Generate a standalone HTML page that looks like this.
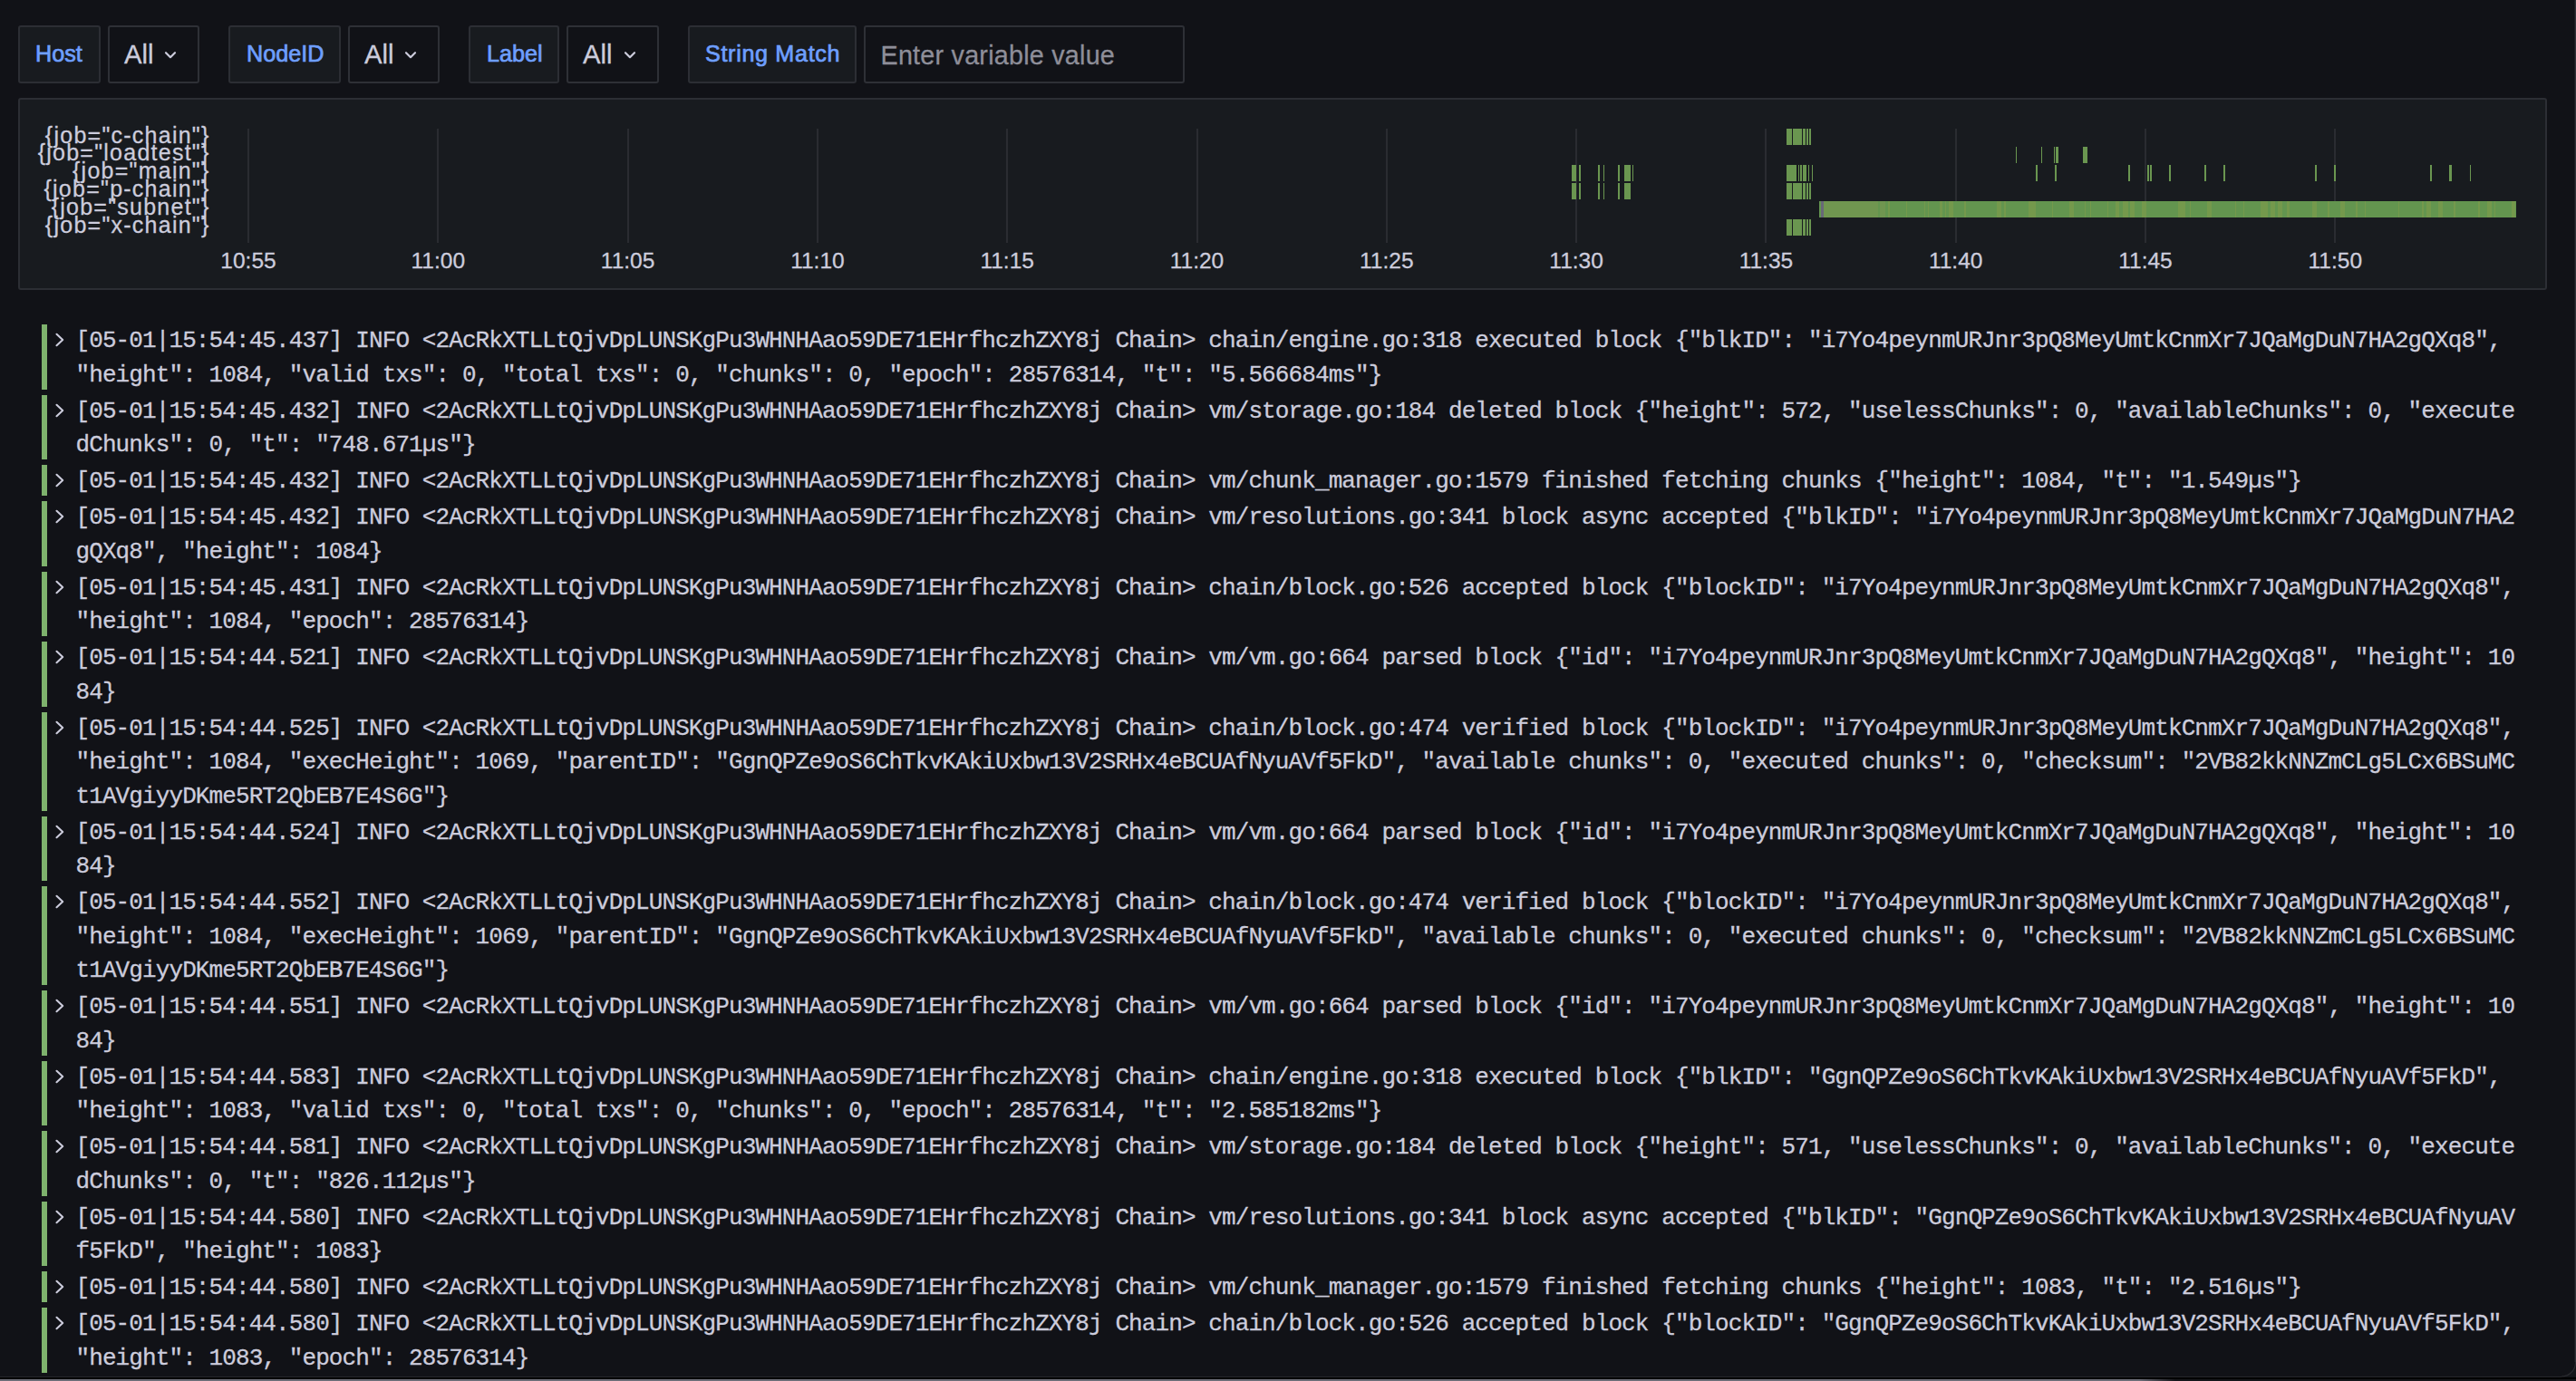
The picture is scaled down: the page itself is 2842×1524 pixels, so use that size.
<!DOCTYPE html>
<html><head><meta charset="utf-8"><style>
html,body{margin:0;padding:0;}
body{width:2842px;height:1524px;overflow:hidden;background:#111217;position:relative;font-family:"Liberation Sans",sans-serif;color:#ccccdc;}
.abs{position:absolute;}
.lbl{position:absolute;top:28px;height:64px;box-sizing:border-box;background:#181b1f;border:2px solid #2c2e34;border-radius:3px;}
.val{position:absolute;top:28px;height:64px;box-sizing:border-box;background:#111217;border:2px solid #2e3036;border-radius:3px;}
.lt{position:absolute;font-weight:400;font-size:25.2px;line-height:25px;color:#6e9fff;white-space:pre;-webkit-text-stroke:0.7px #6e9fff;}
.vt{position:absolute;font-size:29.3px;line-height:28.5px;color:#ccccdc;white-space:pre;-webkit-text-stroke:0.3px #ccccdc;}
.chev{position:absolute;top:55.5px;width:14px;height:10px;}
#panel{position:absolute;left:20px;top:108px;width:2790px;height:212px;box-sizing:border-box;background:#181b1f;border:2px solid #2c2e34;border-radius:3px;}
.job{position:absolute;right:2610.4px;font-size:25px;line-height:25px;letter-spacing:1.25px;white-space:pre;text-align:right;-webkit-text-stroke:0.3px #ccccdc;}
.grid{position:absolute;top:142px;height:126px;width:2px;background:#2a2c31;}
.ax{position:absolute;top:0;font-size:24.5px;line-height:24.5px;white-space:pre;width:120px;text-align:center;-webkit-text-stroke:0.3px #ccccdc;}
.tk{position:absolute;height:18px;background:#6a9650;}
.ent{position:absolute;left:0;width:2842px;}
.bar{position:absolute;left:46px;width:6px;top:3px;background:#7eb26d;}
.cv{position:absolute;left:60px;width:12px;height:16px;}
.tx{position:absolute;left:83.5px;top:3px;font-family:"Liberation Mono",monospace;font-size:26px;letter-spacing:-0.899px;line-height:37.5px;white-space:pre;color:#ccccdc;-webkit-text-stroke:0.3px #ccccdc;}
</style></head><body>

<div class="lbl" style="left:20px;width:91px"></div>
<div class="lt" style="left:39px;top:47px;letter-spacing:0px">Host</div>
<div class="val" style="left:119px;width:101px"></div>
<div class="vt" style="left:137px;top:46px">All</div>
<svg class="chev" style="left:181px" viewBox="0 0 14 10"><path d="M2 2.2 L7 7.2 L12 2.2" fill="none" stroke="#ccccdc" stroke-width="2.2" stroke-linecap="round" stroke-linejoin="round"/></svg>
<div class="lbl" style="left:252px;width:124px"></div>
<div class="lt" style="left:272px;top:47px;letter-spacing:0px">NodeID</div>
<div class="val" style="left:384px;width:101px"></div>
<div class="vt" style="left:402px;top:46px">All</div>
<svg class="chev" style="left:446px" viewBox="0 0 14 10"><path d="M2 2.2 L7 7.2 L12 2.2" fill="none" stroke="#ccccdc" stroke-width="2.2" stroke-linecap="round" stroke-linejoin="round"/></svg>
<div class="lbl" style="left:517px;width:100px"></div>
<div class="lt" style="left:537px;top:47px;letter-spacing:0px">Label</div>
<div class="val" style="left:625px;width:102px"></div>
<div class="vt" style="left:643px;top:46px">All</div>
<svg class="chev" style="left:688px" viewBox="0 0 14 10"><path d="M2 2.2 L7 7.2 L12 2.2" fill="none" stroke="#ccccdc" stroke-width="2.2" stroke-linecap="round" stroke-linejoin="round"/></svg>
<div class="lbl" style="left:759px;width:186px"></div>
<div class="lt" style="left:778px;top:47px;letter-spacing:0.65px">String Match</div>
<div class="val" style="left:953px;width:354px"></div>
<div class="vt" style="left:971.5px;top:46.5px;color:#8e8e99;font-size:28.7px;letter-spacing:0.25px;-webkit-text-stroke:0.3px #8e8e99">Enter variable value</div>
<div id="panel"></div>
<div class="job" style="top:136.55px">{job="c-chain"}</div>
<div class="job" style="top:156.41px">{job="loadtest"}</div>
<div class="job" style="top:176.27px">{job="main"}</div>
<div class="job" style="top:196.13px">{job="p-chain"}</div>
<div class="job" style="top:215.99px">{job="subnet"}</div>
<div class="job" style="top:235.85px">{job="x-chain"}</div>
<div class="grid" style="left:273.00px"></div>
<div class="ax" style="left:214.00px;top:276.43px">10:55</div>
<div class="grid" style="left:482.30px"></div>
<div class="ax" style="left:423.30px;top:276.43px">11:00</div>
<div class="grid" style="left:691.60px"></div>
<div class="ax" style="left:632.60px;top:276.43px">11:05</div>
<div class="grid" style="left:900.90px"></div>
<div class="ax" style="left:841.90px;top:276.43px">11:10</div>
<div class="grid" style="left:1110.20px"></div>
<div class="ax" style="left:1051.20px;top:276.43px">11:15</div>
<div class="grid" style="left:1319.50px"></div>
<div class="ax" style="left:1260.50px;top:276.43px">11:20</div>
<div class="grid" style="left:1528.80px"></div>
<div class="ax" style="left:1469.80px;top:276.43px">11:25</div>
<div class="grid" style="left:1738.10px"></div>
<div class="ax" style="left:1679.10px;top:276.43px">11:30</div>
<div class="grid" style="left:1947.40px"></div>
<div class="ax" style="left:1888.40px;top:276.43px">11:35</div>
<div class="grid" style="left:2156.70px"></div>
<div class="ax" style="left:2097.70px;top:276.43px">11:40</div>
<div class="grid" style="left:2366.00px"></div>
<div class="ax" style="left:2307.00px;top:276.43px">11:45</div>
<div class="grid" style="left:2575.30px"></div>
<div class="ax" style="left:2516.30px;top:276.43px">11:50</div>
<div class="tk" style="left:1734.0px;width:5.0px;top:182px"></div>
<div class="tk" style="left:1734.0px;width:5.0px;top:202px"></div>
<div class="tk" style="left:1742.0px;width:2.0px;top:182px"></div>
<div class="tk" style="left:1742.0px;width:2.0px;top:202px"></div>
<div class="tk" style="left:1763.0px;width:2.0px;top:182px"></div>
<div class="tk" style="left:1763.0px;width:2.0px;top:202px"></div>
<div class="tk" style="left:1769.0px;width:1.2px;top:182px"></div>
<div class="tk" style="left:1769.0px;width:1.2px;top:202px"></div>
<div class="tk" style="left:1785.0px;width:2.0px;top:182px"></div>
<div class="tk" style="left:1785.0px;width:2.0px;top:202px"></div>
<div class="tk" style="left:1792.0px;width:7.0px;top:182px"></div>
<div class="tk" style="left:1792.0px;width:7.0px;top:202px"></div>
<div class="tk" style="left:1801.0px;width:1.2px;top:182px"></div>
<div class="tk" style="left:1971.0px;width:6.0px;top:142px"></div>
<div class="tk" style="left:1971.0px;width:6.0px;top:202px"></div>
<div class="tk" style="left:1971.0px;width:6.0px;top:242px"></div>
<div class="tk" style="left:1978.0px;width:10.0px;top:142px"></div>
<div class="tk" style="left:1978.0px;width:10.0px;top:202px"></div>
<div class="tk" style="left:1978.0px;width:10.0px;top:242px"></div>
<div class="tk" style="left:1989.0px;width:3.0px;top:142px"></div>
<div class="tk" style="left:1989.0px;width:3.0px;top:202px"></div>
<div class="tk" style="left:1989.0px;width:3.0px;top:242px"></div>
<div class="tk" style="left:1993.0px;width:2.0px;top:142px"></div>
<div class="tk" style="left:1993.0px;width:2.0px;top:202px"></div>
<div class="tk" style="left:1993.0px;width:2.0px;top:242px"></div>
<div class="tk" style="left:1996.0px;width:2.0px;top:142px"></div>
<div class="tk" style="left:1996.0px;width:2.0px;top:202px"></div>
<div class="tk" style="left:1996.0px;width:2.0px;top:242px"></div>
<div class="tk" style="left:1971.0px;width:11.0px;top:182px"></div>
<div class="tk" style="left:1983.7px;width:1.3px;top:182px"></div>
<div class="tk" style="left:1986.0px;width:2.0px;top:182px"></div>
<div class="tk" style="left:1989.0px;width:4.0px;top:182px"></div>
<div class="tk" style="left:1994.8px;width:1.2px;top:182px"></div>
<div class="tk" style="left:1999.0px;width:1.2px;top:182px"></div>
<div class="tk" style="left:2224.0px;width:1.2px;top:162px"></div>
<div class="tk" style="left:2252.0px;width:1.2px;top:162px"></div>
<div class="tk" style="left:2266.0px;width:1.2px;top:162px"></div>
<div class="tk" style="left:2268.2px;width:2.8px;top:162px"></div>
<div class="tk" style="left:2298.0px;width:5.0px;top:162px"></div>
<div class="tk" style="left:2245.7px;width:2.0px;top:182px"></div>
<div class="tk" style="left:2266.7px;width:2.0px;top:182px"></div>
<div class="tk" style="left:2347.6px;width:2.0px;top:182px"></div>
<div class="tk" style="left:2368.6px;width:2.0px;top:182px"></div>
<div class="tk" style="left:2371.7px;width:2.0px;top:182px"></div>
<div class="tk" style="left:2392.6px;width:2.0px;top:182px"></div>
<div class="tk" style="left:2431.6px;width:2.0px;top:182px"></div>
<div class="tk" style="left:2452.5px;width:2.0px;top:182px"></div>
<div class="tk" style="left:2554.2px;width:2.0px;top:182px"></div>
<div class="tk" style="left:2575.2px;width:2.0px;top:182px"></div>
<div class="tk" style="left:2681.2px;width:2.0px;top:182px"></div>
<div class="tk" style="left:2702.0px;width:3.0px;top:182px"></div>
<div class="tk" style="left:2725.0px;width:1.2px;top:182px"></div>
<div class="tk" style="left:2007px;width:769px;top:222px;background:linear-gradient(90deg,#63954f 0.0px,#63954f 8.0px,#74994c 8.0px,#74994c 9.5px,#63954f 9.5px,#63954f 21.5px,#74994c 21.5px,#74994c 29.5px,#63954f 29.5px,#63954f 32.5px,#74994c 32.5px,#74994c 33.5px,#63954f 33.5px,#63954f 68.5px,#74994c 68.5px,#74994c 73.5px,#63954f 73.5px,#63954f 76.5px,#74994c 76.5px,#74994c 78.5px,#63954f 78.5px,#63954f 96.5px,#74994c 96.5px,#74994c 97.5px,#63954f 97.5px,#63954f 115.5px,#74994c 115.5px,#74994c 117.0px,#63954f 117.0px,#63954f 120.0px,#74994c 120.0px,#74994c 121.0px,#63954f 121.0px,#63954f 133.0px,#74994c 133.0px,#74994c 136.0px,#63954f 136.0px,#63954f 139.0px,#74994c 139.0px,#74994c 140.5px,#63954f 140.5px,#63954f 143.5px,#74994c 143.5px,#74994c 148.5px,#63954f 148.5px,#63954f 160.5px,#74994c 160.5px,#74994c 161.5px,#63954f 161.5px,#63954f 196.5px,#74994c 196.5px,#74994c 201.5px,#63954f 201.5px,#63954f 204.5px,#74994c 204.5px,#74994c 206.0px,#63954f 206.0px,#63954f 231.0px,#74994c 231.0px,#74994c 239.0px,#63954f 239.0px,#63954f 257.0px,#74994c 257.0px,#74994c 258.0px,#63954f 258.0px,#63954f 276.0px,#74994c 276.0px,#74994c 281.0px,#63954f 281.0px,#63954f 293.0px,#74994c 293.0px,#74994c 294.0px,#63954f 294.0px,#63954f 299.0px,#74994c 299.0px,#74994c 300.0px,#63954f 300.0px,#63954f 318.0px,#74994c 318.0px,#74994c 319.5px,#63954f 319.5px,#63954f 327.5px,#74994c 327.5px,#74994c 330.5px,#63954f 330.5px,#63954f 335.5px,#74994c 335.5px,#74994c 340.5px,#63954f 340.5px,#63954f 343.5px,#74994c 343.5px,#74994c 348.5px,#63954f 348.5px,#63954f 356.5px,#74994c 356.5px,#74994c 361.5px,#63954f 361.5px,#63954f 396.5px,#74994c 396.5px,#74994c 404.5px,#63954f 404.5px,#63954f 409.5px,#74994c 409.5px,#74994c 410.5px,#63954f 410.5px,#63954f 428.5px,#74994c 428.5px,#74994c 433.5px,#63954f 433.5px,#63954f 458.5px,#74994c 458.5px,#74994c 460.0px,#63954f 460.0px,#63954f 468.0px,#74994c 468.0px,#74994c 469.0px,#63954f 469.0px,#63954f 487.0px,#74994c 487.0px,#74994c 495.0px,#63954f 495.0px,#63954f 498.0px,#74994c 498.0px,#74994c 503.0px,#63954f 503.0px,#63954f 506.0px,#74994c 506.0px,#74994c 511.0px,#63954f 511.0px,#63954f 516.0px,#74994c 516.0px,#74994c 519.0px,#63954f 519.0px,#63954f 544.0px,#74994c 544.0px,#74994c 549.0px,#63954f 549.0px,#63954f 561.0px,#74994c 561.0px,#74994c 563.0px,#63954f 563.0px,#63954f 575.0px,#74994c 575.0px,#74994c 580.0px,#63954f 580.0px,#63954f 592.0px,#74994c 592.0px,#74994c 594.0px,#63954f 594.0px,#63954f 602.0px,#74994c 602.0px,#74994c 603.5px,#63954f 603.5px,#63954f 638.5px,#74994c 638.5px,#74994c 640.0px,#63954f 640.0px,#63954f 665.0px,#74994c 665.0px,#74994c 666.5px,#63954f 666.5px,#63954f 669.5px,#74994c 669.5px,#74994c 674.5px,#63954f 674.5px,#63954f 682.5px,#74994c 682.5px,#74994c 687.5px,#63954f 687.5px,#63954f 699.5px,#74994c 699.5px,#74994c 701.5px,#63954f 701.5px,#63954f 726.5px,#74994c 726.5px,#74994c 729.5px,#63954f 729.5px,#63954f 737.5px,#74994c 737.5px,#74994c 742.5px,#63954f 742.5px,#63954f 745.5px,#74994c 745.5px,#74994c 746.5px,#63954f 746.5px,#63954f 764.5px,#74994c 764.5px,#74994c 767.5px,#63954f 767.5px,#63954f 772.5px,#74994c 772.5px,#74994c 774.5px)"></div>
<div class="tk" style="left:2012px;width:68px;top:222px;background:linear-gradient(90deg,#709650 0,#709650 60px,#63954f 60px,#63954f 62px,#709650 62px)"></div>
<div class="tk" style="left:2009px;width:3px;top:222px;background:#686878"></div>
<div class="ent" style="top:355.00px;height:77.50px">
<div class="bar" style="height:71.50px"></div>
<svg class="cv" style="top:12px" viewBox="0 0 12 16"><path d="M2.5 1.8 L9.2 8 L2.5 14.2" fill="none" stroke="#ccccdc" stroke-width="2.1" stroke-linecap="round" stroke-linejoin="round"/></svg>
<div class="tx">[05-01|15:54:45.437] INFO &lt;2AcRkXTLLtQjvDpLUNSKgPu3WHNHAao59DE71EHrfhczhZXY8j Chain&gt; chain/engine.go:318 executed block {&quot;blkID&quot;: &quot;i7Yo4peynmURJnr3pQ8MeyUmtkCnmXr7JQaMgDuN7HA2gQXq8&quot;, 
&quot;height&quot;: 1084, &quot;valid txs&quot;: 0, &quot;total txs&quot;: 0, &quot;chunks&quot;: 0, &quot;epoch&quot;: 28576314, &quot;t&quot;: &quot;5.566684ms&quot;}</div>
</div>
<div class="ent" style="top:432.50px;height:77.50px">
<div class="bar" style="height:71.50px"></div>
<svg class="cv" style="top:12px" viewBox="0 0 12 16"><path d="M2.5 1.8 L9.2 8 L2.5 14.2" fill="none" stroke="#ccccdc" stroke-width="2.1" stroke-linecap="round" stroke-linejoin="round"/></svg>
<div class="tx">[05-01|15:54:45.432] INFO &lt;2AcRkXTLLtQjvDpLUNSKgPu3WHNHAao59DE71EHrfhczhZXY8j Chain&gt; vm/storage.go:184 deleted block {&quot;height&quot;: 572, &quot;uselessChunks&quot;: 0, &quot;availableChunks&quot;: 0, &quot;execute
dChunks&quot;: 0, &quot;t&quot;: &quot;748.671µs&quot;}</div>
</div>
<div class="ent" style="top:510.00px;height:40.00px">
<div class="bar" style="height:34.00px"></div>
<svg class="cv" style="top:12px" viewBox="0 0 12 16"><path d="M2.5 1.8 L9.2 8 L2.5 14.2" fill="none" stroke="#ccccdc" stroke-width="2.1" stroke-linecap="round" stroke-linejoin="round"/></svg>
<div class="tx">[05-01|15:54:45.432] INFO &lt;2AcRkXTLLtQjvDpLUNSKgPu3WHNHAao59DE71EHrfhczhZXY8j Chain&gt; vm/chunk_manager.go:1579 finished fetching chunks {&quot;height&quot;: 1084, &quot;t&quot;: &quot;1.549µs&quot;}</div>
</div>
<div class="ent" style="top:550.00px;height:77.50px">
<div class="bar" style="height:71.50px"></div>
<svg class="cv" style="top:12px" viewBox="0 0 12 16"><path d="M2.5 1.8 L9.2 8 L2.5 14.2" fill="none" stroke="#ccccdc" stroke-width="2.1" stroke-linecap="round" stroke-linejoin="round"/></svg>
<div class="tx">[05-01|15:54:45.432] INFO &lt;2AcRkXTLLtQjvDpLUNSKgPu3WHNHAao59DE71EHrfhczhZXY8j Chain&gt; vm/resolutions.go:341 block async accepted {&quot;blkID&quot;: &quot;i7Yo4peynmURJnr3pQ8MeyUmtkCnmXr7JQaMgDuN7HA2
gQXq8&quot;, &quot;height&quot;: 1084}</div>
</div>
<div class="ent" style="top:627.50px;height:77.50px">
<div class="bar" style="height:71.50px"></div>
<svg class="cv" style="top:12px" viewBox="0 0 12 16"><path d="M2.5 1.8 L9.2 8 L2.5 14.2" fill="none" stroke="#ccccdc" stroke-width="2.1" stroke-linecap="round" stroke-linejoin="round"/></svg>
<div class="tx">[05-01|15:54:45.431] INFO &lt;2AcRkXTLLtQjvDpLUNSKgPu3WHNHAao59DE71EHrfhczhZXY8j Chain&gt; chain/block.go:526 accepted block {&quot;blockID&quot;: &quot;i7Yo4peynmURJnr3pQ8MeyUmtkCnmXr7JQaMgDuN7HA2gQXq8&quot;,
&quot;height&quot;: 1084, &quot;epoch&quot;: 28576314}</div>
</div>
<div class="ent" style="top:705.00px;height:77.50px">
<div class="bar" style="height:71.50px"></div>
<svg class="cv" style="top:12px" viewBox="0 0 12 16"><path d="M2.5 1.8 L9.2 8 L2.5 14.2" fill="none" stroke="#ccccdc" stroke-width="2.1" stroke-linecap="round" stroke-linejoin="round"/></svg>
<div class="tx">[05-01|15:54:44.521] INFO &lt;2AcRkXTLLtQjvDpLUNSKgPu3WHNHAao59DE71EHrfhczhZXY8j Chain&gt; vm/vm.go:664 parsed block {&quot;id&quot;: &quot;i7Yo4peynmURJnr3pQ8MeyUmtkCnmXr7JQaMgDuN7HA2gQXq8&quot;, &quot;height&quot;: 10
84}</div>
</div>
<div class="ent" style="top:782.50px;height:115.00px">
<div class="bar" style="height:109.00px"></div>
<svg class="cv" style="top:12px" viewBox="0 0 12 16"><path d="M2.5 1.8 L9.2 8 L2.5 14.2" fill="none" stroke="#ccccdc" stroke-width="2.1" stroke-linecap="round" stroke-linejoin="round"/></svg>
<div class="tx">[05-01|15:54:44.525] INFO &lt;2AcRkXTLLtQjvDpLUNSKgPu3WHNHAao59DE71EHrfhczhZXY8j Chain&gt; chain/block.go:474 verified block {&quot;blockID&quot;: &quot;i7Yo4peynmURJnr3pQ8MeyUmtkCnmXr7JQaMgDuN7HA2gQXq8&quot;,
&quot;height&quot;: 1084, &quot;execHeight&quot;: 1069, &quot;parentID&quot;: &quot;GgnQPZe9oS6ChTkvKAkiUxbw13V2SRHx4eBCUAfNyuAVf5FkD&quot;, &quot;available chunks&quot;: 0, &quot;executed chunks&quot;: 0, &quot;checksum&quot;: &quot;2VB82kkNNZmCLg5LCx6BSuMC
t1AVgiyyDKme5RT2QbEB7E4S6G&quot;}</div>
</div>
<div class="ent" style="top:897.50px;height:77.50px">
<div class="bar" style="height:71.50px"></div>
<svg class="cv" style="top:12px" viewBox="0 0 12 16"><path d="M2.5 1.8 L9.2 8 L2.5 14.2" fill="none" stroke="#ccccdc" stroke-width="2.1" stroke-linecap="round" stroke-linejoin="round"/></svg>
<div class="tx">[05-01|15:54:44.524] INFO &lt;2AcRkXTLLtQjvDpLUNSKgPu3WHNHAao59DE71EHrfhczhZXY8j Chain&gt; vm/vm.go:664 parsed block {&quot;id&quot;: &quot;i7Yo4peynmURJnr3pQ8MeyUmtkCnmXr7JQaMgDuN7HA2gQXq8&quot;, &quot;height&quot;: 10
84}</div>
</div>
<div class="ent" style="top:975.00px;height:115.00px">
<div class="bar" style="height:109.00px"></div>
<svg class="cv" style="top:12px" viewBox="0 0 12 16"><path d="M2.5 1.8 L9.2 8 L2.5 14.2" fill="none" stroke="#ccccdc" stroke-width="2.1" stroke-linecap="round" stroke-linejoin="round"/></svg>
<div class="tx">[05-01|15:54:44.552] INFO &lt;2AcRkXTLLtQjvDpLUNSKgPu3WHNHAao59DE71EHrfhczhZXY8j Chain&gt; chain/block.go:474 verified block {&quot;blockID&quot;: &quot;i7Yo4peynmURJnr3pQ8MeyUmtkCnmXr7JQaMgDuN7HA2gQXq8&quot;,
&quot;height&quot;: 1084, &quot;execHeight&quot;: 1069, &quot;parentID&quot;: &quot;GgnQPZe9oS6ChTkvKAkiUxbw13V2SRHx4eBCUAfNyuAVf5FkD&quot;, &quot;available chunks&quot;: 0, &quot;executed chunks&quot;: 0, &quot;checksum&quot;: &quot;2VB82kkNNZmCLg5LCx6BSuMC
t1AVgiyyDKme5RT2QbEB7E4S6G&quot;}</div>
</div>
<div class="ent" style="top:1090.00px;height:77.50px">
<div class="bar" style="height:71.50px"></div>
<svg class="cv" style="top:12px" viewBox="0 0 12 16"><path d="M2.5 1.8 L9.2 8 L2.5 14.2" fill="none" stroke="#ccccdc" stroke-width="2.1" stroke-linecap="round" stroke-linejoin="round"/></svg>
<div class="tx">[05-01|15:54:44.551] INFO &lt;2AcRkXTLLtQjvDpLUNSKgPu3WHNHAao59DE71EHrfhczhZXY8j Chain&gt; vm/vm.go:664 parsed block {&quot;id&quot;: &quot;i7Yo4peynmURJnr3pQ8MeyUmtkCnmXr7JQaMgDuN7HA2gQXq8&quot;, &quot;height&quot;: 10
84}</div>
</div>
<div class="ent" style="top:1167.50px;height:77.50px">
<div class="bar" style="height:71.50px"></div>
<svg class="cv" style="top:12px" viewBox="0 0 12 16"><path d="M2.5 1.8 L9.2 8 L2.5 14.2" fill="none" stroke="#ccccdc" stroke-width="2.1" stroke-linecap="round" stroke-linejoin="round"/></svg>
<div class="tx">[05-01|15:54:44.583] INFO &lt;2AcRkXTLLtQjvDpLUNSKgPu3WHNHAao59DE71EHrfhczhZXY8j Chain&gt; chain/engine.go:318 executed block {&quot;blkID&quot;: &quot;GgnQPZe9oS6ChTkvKAkiUxbw13V2SRHx4eBCUAfNyuAVf5FkD&quot;, 
&quot;height&quot;: 1083, &quot;valid txs&quot;: 0, &quot;total txs&quot;: 0, &quot;chunks&quot;: 0, &quot;epoch&quot;: 28576314, &quot;t&quot;: &quot;2.585182ms&quot;}</div>
</div>
<div class="ent" style="top:1245.00px;height:77.50px">
<div class="bar" style="height:71.50px"></div>
<svg class="cv" style="top:12px" viewBox="0 0 12 16"><path d="M2.5 1.8 L9.2 8 L2.5 14.2" fill="none" stroke="#ccccdc" stroke-width="2.1" stroke-linecap="round" stroke-linejoin="round"/></svg>
<div class="tx">[05-01|15:54:44.581] INFO &lt;2AcRkXTLLtQjvDpLUNSKgPu3WHNHAao59DE71EHrfhczhZXY8j Chain&gt; vm/storage.go:184 deleted block {&quot;height&quot;: 571, &quot;uselessChunks&quot;: 0, &quot;availableChunks&quot;: 0, &quot;execute
dChunks&quot;: 0, &quot;t&quot;: &quot;826.112µs&quot;}</div>
</div>
<div class="ent" style="top:1322.50px;height:77.50px">
<div class="bar" style="height:71.50px"></div>
<svg class="cv" style="top:12px" viewBox="0 0 12 16"><path d="M2.5 1.8 L9.2 8 L2.5 14.2" fill="none" stroke="#ccccdc" stroke-width="2.1" stroke-linecap="round" stroke-linejoin="round"/></svg>
<div class="tx">[05-01|15:54:44.580] INFO &lt;2AcRkXTLLtQjvDpLUNSKgPu3WHNHAao59DE71EHrfhczhZXY8j Chain&gt; vm/resolutions.go:341 block async accepted {&quot;blkID&quot;: &quot;GgnQPZe9oS6ChTkvKAkiUxbw13V2SRHx4eBCUAfNyuAV
f5FkD&quot;, &quot;height&quot;: 1083}</div>
</div>
<div class="ent" style="top:1400.00px;height:40.00px">
<div class="bar" style="height:34.00px"></div>
<svg class="cv" style="top:12px" viewBox="0 0 12 16"><path d="M2.5 1.8 L9.2 8 L2.5 14.2" fill="none" stroke="#ccccdc" stroke-width="2.1" stroke-linecap="round" stroke-linejoin="round"/></svg>
<div class="tx">[05-01|15:54:44.580] INFO &lt;2AcRkXTLLtQjvDpLUNSKgPu3WHNHAao59DE71EHrfhczhZXY8j Chain&gt; vm/chunk_manager.go:1579 finished fetching chunks {&quot;height&quot;: 1083, &quot;t&quot;: &quot;2.516µs&quot;}</div>
</div>
<div class="ent" style="top:1440.00px;height:77.50px">
<div class="bar" style="height:71.50px"></div>
<svg class="cv" style="top:12px" viewBox="0 0 12 16"><path d="M2.5 1.8 L9.2 8 L2.5 14.2" fill="none" stroke="#ccccdc" stroke-width="2.1" stroke-linecap="round" stroke-linejoin="round"/></svg>
<div class="tx">[05-01|15:54:44.580] INFO &lt;2AcRkXTLLtQjvDpLUNSKgPu3WHNHAao59DE71EHrfhczhZXY8j Chain&gt; chain/block.go:526 accepted block {&quot;blockID&quot;: &quot;GgnQPZe9oS6ChTkvKAkiUxbw13V2SRHx4eBCUAfNyuAVf5FkD&quot;,
&quot;height&quot;: 1083, &quot;epoch&quot;: 28576314}</div>
</div>
<div class="abs" style="left:2840px;top:0;width:1px;height:1503px;background:#1c1d22"></div>
<div class="abs" style="left:2841px;top:0;width:1px;height:1503px;background:#323339"></div>
<svg class="abs" style="left:2802px;top:1490px" width="40" height="34" viewBox="0 0 40 34"><path d="M40 13 A16 16 0 0 1 24 29.5 L40 29.5 Z" fill="#15161a"/><path d="M39.5 13 A15.5 15.5 0 0 1 24 29" fill="none" stroke="#2a2b30" stroke-width="1.2"/></svg>
<div class="abs" style="left:0;top:1519px;width:2826px;height:1px;background:#26272c"></div>
<div class="abs" style="left:0;top:1520px;width:2842px;height:2px;background:#000"></div>
<div class="abs" style="left:0;top:1522px;width:2842px;height:2px;background:linear-gradient(90deg,#6c6d78 0,#6c6d78 2360px,#15161a 2400px)"></div>
</body></html>
